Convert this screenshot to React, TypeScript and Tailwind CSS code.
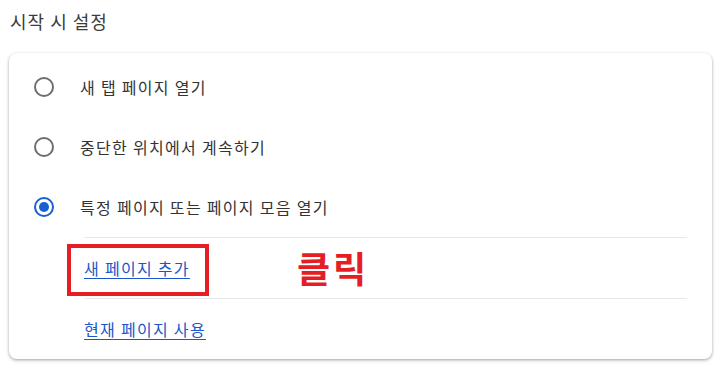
import React from "react";

const font = { fontFamily: '"Noto Sans CJK KR", "Noto Sans", sans-serif' };

interface RadioRowProps {
  label: string
  checked?: boolean
}

const RadioRow: React.FC<RadioRowProps> = ({ label, checked }) => (
  <div className="flex h-[60px] items-center">
    <div className="ml-[25px] flex w-[20px] h-[20px] items-center justify-center">
      <span
        className={`flex h-[20px] w-[20px] items-center justify-center rounded-full border-2 ${
          checked ? "border-[#1a5fd0]" : "border-[#6e6e6e]"
        }`}
      >
        {checked && <span className="h-[10px] w-[10px] rounded-full bg-[#1a5fd0]" />}
      </span>
    </div>
    <span className="ml-[26px] text-[16px] tracking-[1.3px] text-[#333]">{label}</span>
  </div>
);

export default function App() {
  return (
    <div className="h-[373px] w-[720px] bg-white" style={font}>
      <div className="flex h-[53px] items-start pl-[10px] pt-[7px]">
        <h2 className="text-[18px] leading-[28px] tracking-[1px] text-[#3c3c3c]">시작 시 설정</h2>
      </div>
      <div className="ml-[9px] w-[703px] rounded-lg bg-white pt-[4px] pb-[1px] shadow-[0_1px_3px_rgba(0,0,0,0.3),0_2px_5px_rgba(0,0,0,0.08)]">
        <RadioRow label="새 탭 페이지 열기" />
        <RadioRow label="중단한 위치에서 계속하기" />
        <RadioRow label="특정 페이지 또는 페이지 모음 열기" checked />
        <div className="ml-[75px] mr-[25px] border-t border-[#e8e8e8]">
          <div className="relative flex h-[60px] items-center">
            <a href="#" className="text-[16px] tracking-[1.3px] text-[#1a56c9] underline underline-offset-[3px]">
              새 페이지 추가
            </a>
            <div className="absolute left-[-17px] top-[6px] h-[52px] w-[142px] border-4 border-[#e31e25]" />
            <span className="absolute left-[213px] top-[9px] text-[36px] font-bold leading-[40px] tracking-[3px] text-[#e31e25]">
              클릭
            </span>
          </div>
          <div className="flex h-[60px] items-center border-t border-[#e8e8e8]">
            <a href="#" className="text-[16px] tracking-[1.3px] text-[#1a56c9] underline underline-offset-[3px]">
              현재 페이지 사용
            </a>
          </div>
        </div>
      </div>
    </div>
  );
}
